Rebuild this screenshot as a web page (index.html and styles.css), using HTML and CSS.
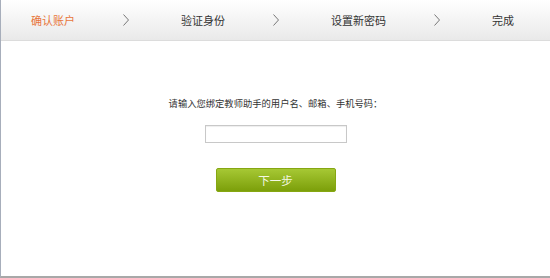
FILE: index.html
```html
<!DOCTYPE html>
<html lang="zh-CN">
<head>
<meta charset="utf-8">
<title>找回密码</title>
<link rel="stylesheet" href="styles.css">
</head>
<body>
<div class="page">
  <div class="steps">
    <span class="step active">确认账户</span>
    <svg class="arrow" width="6" height="12" viewBox="0 0 6 12"><polyline points="0.5,0.5 5.5,6 0.5,11.5" fill="none" stroke="#777" stroke-width="1"/></svg>
    <span class="step">验证身份</span>
    <svg class="arrow" width="6" height="12" viewBox="0 0 6 12"><polyline points="0.5,0.5 5.5,6 0.5,11.5" fill="none" stroke="#777" stroke-width="1"/></svg>
    <span class="step">设置新密码</span>
    <svg class="arrow" width="6" height="12" viewBox="0 0 6 12"><polyline points="0.5,0.5 5.5,6 0.5,11.5" fill="none" stroke="#777" stroke-width="1"/></svg>
    <span class="step">完成</span>
  </div>
  <div class="content">
    <p class="tip">请输入您绑定教师助手的用户名、邮箱、手机号码：</p>
    <input class="field" type="text">
    <button class="next" type="button">下一步</button>
  </div>
</div>
</body>
</html>
```
FILE: styles.css
```css
html, body {
  margin: 0;
  padding: 0;
  background: #fff;
}
body {
  font-family: "Noto Sans CJK SC", "Microsoft YaHei", sans-serif;
  color: #333;
}
.page {
  width: 550px;
  height: 278px;
  box-sizing: border-box;
  border-left: 1px solid #a7aebb;
  border-bottom: 2px solid #a8a8a8;
  display: flex;
  flex-direction: column;
}
.steps {
  height: 41px;
  flex: none;
  box-sizing: border-box;
  border-bottom: 1px solid #dcdcdc;
  background: linear-gradient(#ffffff, #e9e9e9);
  display: flex;
  align-items: center;
  padding-left: 30px;
}
.step {
  font-size: 11px;
  line-height: 14px;
  color: #333;
  white-space: nowrap;
}
.step.active {
  color: #e8763c;
}
.arrow {
  display: block;
  margin: 0 52px 0 48px;
}
.content {
  display: flex;
  flex-direction: column;
  align-items: center;
  padding-top: 56px;
}
.tip {
  margin: 0;
  font-size: 9.3px;
  line-height: 12px;
  color: #333;
}
.field {
  margin: 16px 0 0;
  width: 142px;
  height: 18px;
  box-sizing: border-box;
  border: 1px solid #c8c8c8;
  box-shadow: inset 0 1px 1px #eee;
  padding: 0 4px;
  outline: none;
  background: #fff;
}
.next {
  margin-top: 25px;
  width: 120px;
  height: 24px;
  box-sizing: border-box;
  border: 1px solid #86a712;
  border-radius: 2px;
  background: linear-gradient(#a6c834, #7c9f0a);
  color: #f4f8e4;
  font-family: "Noto Sans CJK SC", sans-serif;
  font-size: 11.5px;
  line-height: 22px;
  padding: 0;
  cursor: pointer;
}
```
